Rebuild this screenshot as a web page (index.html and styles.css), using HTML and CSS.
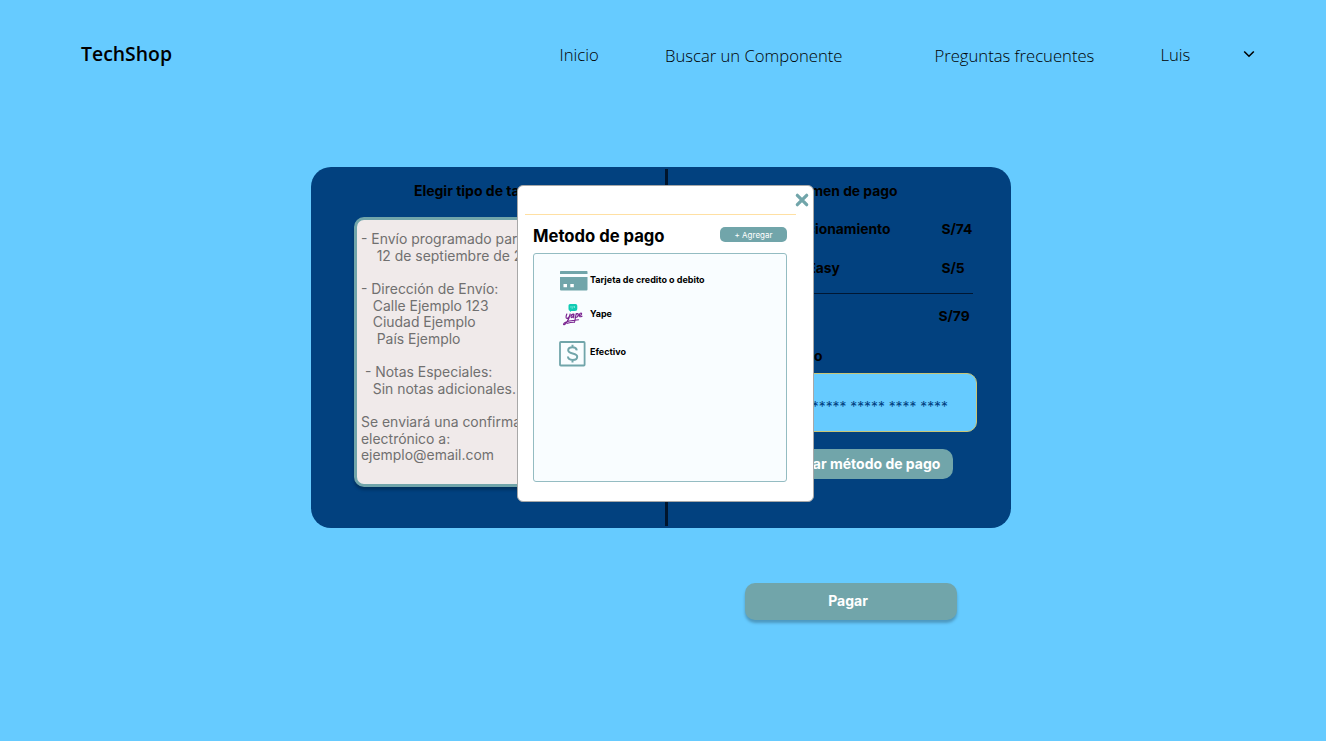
FILE: index.html
```html
<!DOCTYPE html>
<html lang="es">
<head>
<meta charset="utf-8">
<title>TechShop</title>
<link rel="stylesheet" href="styles.css">
</head>
<body>
<header class="header">
  <div class="brand">TechShop</div>
  <nav class="nav">
    <a class="nav-home">Inicio</a>
    <a class="nav-search">Buscar un Componente</a>
    <a class="nav-faq">Preguntas frecuentes</a>
    <a class="nav-user">Luis</a>
    <svg class="chevron" viewBox="0 0 12 8"><path d="M1.2 1.5 6 6.2l4.8-4.7" fill="none" stroke="#000" stroke-width="1.6"/></svg>
  </nav>
</header>
<main>
  <section class="card">
    <div class="shipping">
      <h2 class="shipping-title">Elegir tipo de tarjeta</h2>
      <div class="notes">- Envío programado para el
    12 de septiembre de 2023

- Dirección de Envío:
   Calle Ejemplo 123
   Ciudad Ejemplo
    País Ejemplo

 - Notas Especiales:
   Sin notas adicionales.

Se enviará una confirmación al correo
electrónico a:
ejemplo@email.com</div>
    </div>
    <div class="divider"></div>
    <div class="summary">
      <h2 class="summary-title">Resumen de pago</h2>
      <div class="row"><span class="row-name name-product">Acondicionamiento</span><span class="row-price">S/74</span></div>
      <div class="row row-shipping"><span class="row-name name-easy">Envío Easy</span><span class="row-price">S/5</span></div>
      <div class="rule"></div>
      <div class="row row-total"><span class="row-name">Total</span><span class="row-price">S/79</span></div>
      <h3 class="method-title">Método</h3>
      <div class="method">***** ***** **** ****</div>
      <button class="change">Cambiar método de pago</button>
    </div>
  </section>
  <button class="pay">Pagar</button>
</main>
<div class="modal">
  <div class="modal-top">
    <svg class="close" viewBox="0 0 12 12"><path d="M2 2l8 8M10 2l-8 8" stroke="#71a5aa" stroke-width="2.8" stroke-linecap="round"/></svg>
  </div>
  <div class="modal-head">
    <h1 class="modal-title">Metodo de pago</h1>
    <button class="add">+ Agregar</button>
  </div>
  <div class="options">
    <div class="option option-card">
      <svg class="icon" width="29" height="22" viewBox="0 0 29 22"><path fill="#71a5aa" d="M1.8 1h26a.7.7 0 0 1 .7.7V4H1V1.7A.7.7 0 0 1 1.8 1zM1 7h27.5v12.6a1 1 0 0 1-1 1H2a1 1 0 0 1-1-1z"/><path fill="#fff" d="M4.5 14h3.5v3.3H4.5zM11.3 14h3.5v3.3h-3.5z"/></svg>
      <span>Tarjeta de credito o debito</span>
    </div>
    <div class="option option-yape">
      <svg class="icon" width="29" height="24" viewBox="0 0 29 24"><path fill="#10cbb4" d="M11 1h5.5a1.8 1.8 0 0 1 1.8 1.8v2.7A2.5 2.5 0 0 1 15.8 8h-3.5L11 9V8a2 2 0 0 1-1.5-2V2.6A1.6 1.6 0 0 1 11 1z"/><path d="M12 3v1.5q.8 1.8 2 0V3M15.5 3v2" fill="none" stroke="#8ceee0" stroke-width=".8"/><g fill="none" stroke="#7a2490" stroke-width="1.15" stroke-linecap="round" stroke-linejoin="round"><path d="M7.8 11q-1.600 4.300.2 4.300 2 0 3.200-4.300-1.200 5-3.400 8.300-2.800 3.400-3.300 2 .5-2 5.800-3.300l9.200-1.200M15 11.200q-2.700-.3-3 2.300 0 1.900 1.600.5L15 11.200l-.3 3.500M17.200 10.500l-1.500 8M17 11.500q2.400-2 2.200.4-.5 2.800-2.600 2.300M20.200 12.600q3-.8 2.300-2.400-1.600-.6-2.300 1.800-.2 2.700 2.800 1.200"/><path d="M8.500 20.300q3-1.100 7-1"/></g></svg>
      <span>Yape</span>
    </div>
    <div class="option option-cash">
      <svg class="icon" width="29" height="26" viewBox="0 0 29 26"><rect x="1" y="1" width="24.6" height="23.5" rx=".8" fill="none" stroke="#71a5aa" stroke-width="1.8"/><path d="M17.8 9.3C17.5 7.300 16 6.300 13.500 6.300S9.200 7.400 9.200 9.300c0 4.300 9 2.100 9 6.400 0 2-1.800 3.200-4.600 3.200-2.900 0-4.500-1.300-4.700-3.400M13.500 3.800v2.500M13.500 19v2.500" fill="none" stroke="#71a5aa" stroke-width="2"/></svg>
      <span>Efectivo</span>
    </div>
  </div>
</div>
</body>
</html>
```

FILE: styles.css
```css
* { box-sizing: border-box; }
body {
  margin: 0;
  width: 1326px;
  height: 741px;
  overflow: hidden;
  background: #66cbff;
  font-family: Inter, "Liberation Sans", sans-serif;
  color: #000;
}
h1, h2, h3 { margin: 0; }
button { border: 0; padding: 0; font-family: inherit; color: #fff; background: #71a5aa; }
.header {
  display: flex;
  justify-content: space-between;
  height: 166.5px;
  padding: 40px 71.5px 0 81px;
  font-family: "Open Sans", sans-serif;
}
.brand { font-size: 19.4px; line-height: 28px; font-weight: 550; }
.nav { display: flex; font-size: 16.65px; line-height: 30px; font-weight: 300; white-space: nowrap; }
.nav-search, .nav-faq { padding-top: 1px; }
.nav-home { width: 105.5px; }
.nav-search { width: 269.5px; }
.nav-faq { width: 226px; }
.nav-user { width: 82px; }
.chevron { width: 12px; height: 8px; margin-top: 10px; }

.card {
  display: flex;
  width: 700px;
  height: 361px;
  margin-left: 311.4px;
  border-radius: 20px;
  background: #02417f;
}
.shipping { width: 354px; padding: 15px 20px 0 43px; }
.shipping-title, .summary-title, .method-title, .row { font-size: 13.8px; line-height: 18px; font-weight: 700; white-space: nowrap; }
.shipping-title { margin-left: 59.5px; font-size: 14px; }
.notes {
  height: 270px;
  margin-top: 17px;
  padding: 11.5px 3.6px;
  border: 3px solid #71a5aa;
  border-radius: 10px;
  background: #f0eaea;
  box-shadow: 0 3px 3px rgba(0, 0, 0, .25);
  color: #707070;
  font-size: 13.95px;
  line-height: 16.64px;
  white-space: pre;
  overflow: hidden;
}
.divider { width: 3px; height: 357px; margin-top: 2px; background: #00152d; }
.summary { width: 343px; padding: 15px 34.5px 0 20px; }
.summary-title { width: 209px; text-align: right; }
.row { display: flex; margin-top: 20px; }
.row-name { width: 202px; text-align: right; }
.row-price { margin-left: 51px; }
.row-shipping { margin-top: 21px; }
.name-easy { width: 151.5px; }
.name-easy + .row-price { margin-left: 101.5px; }
.rule { width: 285px; height: 1.5px; margin-top: 16px; background: #001733; }
.row-total { margin-top: 13px; }
.row-total .row-name { width: 80px; }
.row-total .row-price { margin-left: 170px; }
.method-title { width: 134px; margin-top: 21.5px; text-align: right; }
.method {
  height: 58.5px;
  margin-top: 8.5px;
  padding-right: 28px;
  border: 1px solid #c9c574;
  border-radius: 10px;
  background: #66cbff;
  color: #02417f;
  font-size: 13.8px;
  line-height: 66px;
  text-align: right;
}
.change {
  width: 250px;
  height: 30.5px;
  margin: 17px 0 0 15px;
  padding-right: 13px;
  border-radius: 10px;
  font-size: 14px;
  font-weight: 700;
  text-align: right;
}
.pay {
  display: block;
  width: 212px;
  height: 37px;
  margin: 55px 0 0 745px;
  padding: 0 6px 1px 0;
  border-radius: 10px;
  box-shadow: 0 3px 3px rgba(0, 0, 0, .25);
  font-size: 14px;
  font-weight: 700;
}

.modal {
  position: absolute;
  left: 517px;
  top: 185.4px;
  width: 297px;
  height: 316.5px;
  padding: 0 26px 0 15px;
  border: 1px solid #a8a8a8;
  border-radius: 6px;
  background: #fff;
}
.modal-top {
  display: flex;
  justify-content: flex-end;
  width: 271px;
  height: 28.5px;
  margin-left: -8px;
  border-bottom: 1px solid #ffe0a3;
}
.close { flex: none; width: 14px; height: 14px; margin: 7px -13px 0 0; }
.modal-head { display: flex; justify-content: space-between; width: 254px; margin-top: 12px; height: 26px; }
.modal-title { font-size: 16.65px; line-height: 19px; font-weight: 700; white-space: nowrap; }
.add { width: 67px; height: 15.5px; border-radius: 5px; font-size: 8px; font-weight: 400; }
.options { width: 254px; height: 229px; padding: 16px 0 0 25px; border: 1px solid #94bcc2; border-radius: 3px; background: #f9fdff; }
.option { display: flex; gap: 2px; height: 33px; font-size: 9px; line-height: 20px; font-weight: 700; white-space: nowrap; }
.icon { flex: none; }
.option-yape { height: 38px; }
.option-yape span, .option-cash span { padding-top: 1px; }
```
